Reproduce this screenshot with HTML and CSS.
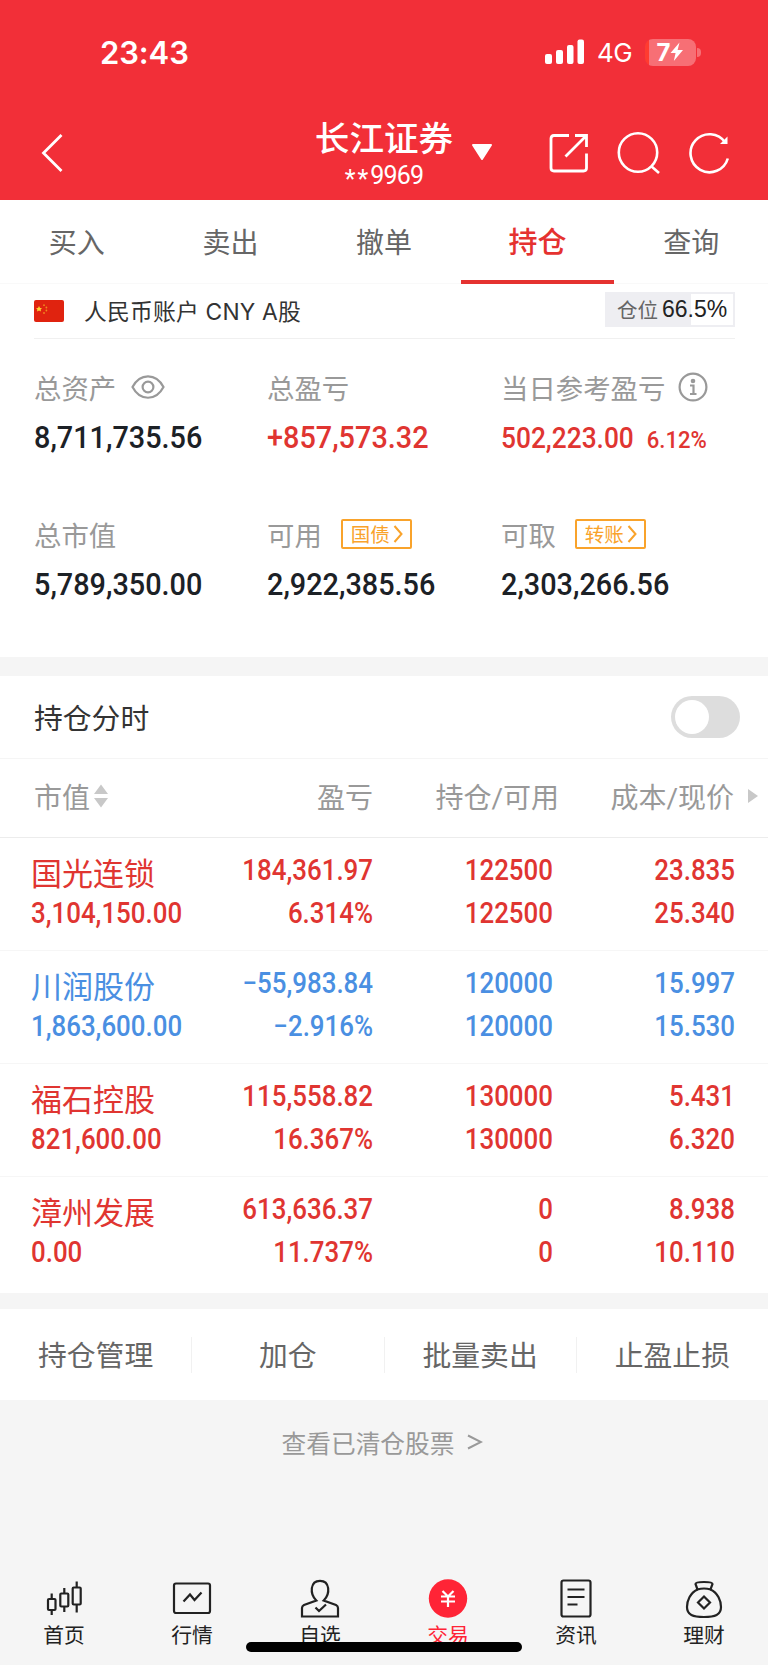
FILE: index.html
```html
<!DOCTYPE html>
<html lang="zh-CN">
<head>
  <meta charset="UTF-8" />
  <meta name="viewport" content="width=device-width, initial-scale=1.0" />
  <title>长江证券 - 持仓</title>
  <link rel="stylesheet" href="styles.css">
</head>
<body>
  <header class="header">
    <div class="status">
      <span class="time">23:43</span>
      <div class="status-right">
        <svg class="signal" width="40" height="26" viewBox="0 0 40 26" fill="#fff">
          <rect x="0" y="15" width="7" height="10" rx="2" />
          <rect x="11" y="11" width="7" height="14" rx="2" />
          <rect x="22" y="6" width="6.5" height="19" rx="2" />
          <rect x="32.5" y="0.5" width="6.5" height="24.5" rx="2" />
        </svg>
        <span class="network">4G</span>
        <div class="battery">
          <span>7</span>
          <svg width="14" height="20" viewBox="0 0 14 20" fill="#fff"><path d="M9.5 0.5 L0.5 11 H5.6 L3.8 19 L13 8 H7.6 Z" /></svg>
        </div>
        <div class="battery-cap"></div>
      </div>
    </div>

    <div class="navbar">
      <svg class="back" width="24" height="40" viewBox="0 0 24 40" fill="none" stroke="#fff" stroke-width="2.8"><path d="M20.5 2 L2.5 20 L20.5 38" /></svg>
      <div class="broker">
        <div class="broker-name">长江证券</div>
        <div class="broker-no"><span>**</span>9969</div>
      </div>
      <svg class="caret" width="22" height="18" viewBox="0 0 22 18" fill="#fff" stroke="#fff" stroke-width="2" stroke-linejoin="round"><path d="M2 2 H20 L11 16 Z" /></svg>
      <div class="nav-icons">
        <svg width="40" height="42" viewBox="0 0 40 42" fill="none" stroke="#fff" stroke-width="2.8">
          <path d="M20 3.5 H5 Q2 3.5 2 6.5 V36 Q2 39 5 39 H34.5 Q37.5 39 37.5 36 V21.5" />
          <path d="M26 3.5 H37.5 V15 M37.5 3.5 L16.5 24.5" />
        </svg>
        <svg width="44" height="42" viewBox="0 0 44 42" fill="none" stroke="#fff" stroke-width="2.6">
          <circle cx="21" cy="20.5" r="19.2" /><path d="M34 34 L42 41" />
        </svg>
        <svg width="42" height="42" viewBox="0 0 42 42" fill="none" stroke="#fff" stroke-width="2.6">
          <path d="M38.8 26.5 A19 19 0 1 1 36.2 10.5" /><path d="M38.5 4.5 V12 H31 Z" fill="#fff" stroke="none" />
        </svg>
      </div>
    </div>
  </header>

  <nav class="tabs">
    <a>买入</a>
    <a>卖出</a>
    <a>撤单</a>
    <a class="active">持仓</a>
    <a>查询</a>
  </nav>

  <section class="account">
    <svg class="flag" width="30" height="22" viewBox="0 0 30 22">
      <rect width="30" height="22" rx="2" fill="#e0230f" />
      <path d="M5 6 L6 8 L8 8.2 L6.6 9.6 L7 11.6 L5 10.6 L3 11.6 L3.4 9.6 L2 8.2 L4 8 Z" fill="#fcd535" />
      <g fill="#f08a20"><circle cx="10" cy="5.2" r="0.9" /><circle cx="12.4" cy="7.5" r="0.9" /><circle cx="12.4" cy="10.5" r="0.9" /><circle cx="10" cy="13" r="0.9" /></g>
    </svg>
    <span class="account-name">人民币账户 CNY A股</span>
    <div class="position"><span>仓位</span><b>66.5%</b></div>
  </section>

  <section class="summary">
    <div class="item">
      <div class="label">总资产
        <svg class="eye" width="34" height="26" viewBox="0 0 34 26" fill="none" stroke="#999" stroke-width="2.2"><path d="M1.5 13 C9 -1.3 25 -1.3 32.5 13 C25 27.3 9 27.3 1.5 13 Z" /><circle cx="17" cy="13" r="5.4" /></svg>
      </div>
      <div class="value">8,711,735.56</div>
    </div>
    <div class="item">
      <div class="label">总盈亏</div>
      <div class="value up">+857,573.32</div>
    </div>
    <div class="item">
      <div class="label">当日参考盈亏
        <svg class="info" width="30" height="30" viewBox="0 0 30 30" fill="none" stroke="#999" stroke-width="2.2"><circle cx="15" cy="15" r="13.4" /><circle cx="15" cy="9" r="2.3" fill="#999" stroke="none" /><path d="M12 13.5 H15.5 V22 M12 22 H18.5" /></svg>
      </div>
      <div class="value small up">502,223.00 <span class="rate">6.12%</span></div>
    </div>
    <div class="item">
      <div class="label">总市值</div>
      <div class="value">5,789,350.00</div>
    </div>
    <div class="item">
      <div class="label">可用
        <span class="link-tag">国债<svg width="10" height="18" viewBox="0 0 10 18" fill="none" stroke="#f9a32b" stroke-width="2"><path d="M1.5 1 L8.5 9 L1.5 17" /></svg></span>
      </div>
      <div class="value">2,922,385.56</div>
    </div>
    <div class="item">
      <div class="label">可取
        <span class="link-tag">转账<svg width="10" height="18" viewBox="0 0 10 18" fill="none" stroke="#f9a32b" stroke-width="2"><path d="M1.5 1 L8.5 9 L1.5 17" /></svg></span>
      </div>
      <div class="value">2,303,266.56</div>
    </div>
  </section>

  <section class="minute">
    <span>持仓分时</span>
    <div class="switch"><i></i></div>
  </section>

  <section class="holdings">
    <div class="row head">
      <div>市值<svg class="sort" width="14" height="24" viewBox="0 0 14 24" fill="#c8c8c8"><path d="M7 0.5 L14 10 H0 Z M0 14 H14 L7 23.5 Z" /></svg></div>
      <div>盈亏</div>
      <div>持仓/可用</div>
      <div>成本/现价</div>
      <svg class="more" width="10" height="14" viewBox="0 0 10 14" fill="#c8c8c8"><path d="M0 0 L10 7 L0 14 Z" /></svg>
    </div>
    <div class="row up">
      <div><p class="name">国光连锁</p><p>3,104,150.00</p></div>
      <div><p>184,361.97</p><p>6.314%</p></div>
      <div><p>122500</p><p>122500</p></div>
      <div><p>23.835</p><p>25.340</p></div>
    </div>
    <div class="row down">
      <div><p class="name">川润股份</p><p>1,863,600.00</p></div>
      <div><p>−55,983.84</p><p>−2.916%</p></div>
      <div><p>120000</p><p>120000</p></div>
      <div><p>15.997</p><p>15.530</p></div>
    </div>
    <div class="row up">
      <div><p class="name">福石控股</p><p>821,600.00</p></div>
      <div><p>115,558.82</p><p>16.367%</p></div>
      <div><p>130000</p><p>130000</p></div>
      <div><p>5.431</p><p>6.320</p></div>
    </div>
    <div class="row up">
      <div><p class="name">漳州发展</p><p>0.00</p></div>
      <div><p>613,636.37</p><p>11.737%</p></div>
      <div><p>0</p><p>0</p></div>
      <div><p>8.938</p><p>10.110</p></div>
    </div>
  </section>

  <section class="actions">
    <a>持仓管理</a>
    <a>加仓</a>
    <a>批量卖出</a>
    <a>止盈止损</a>
  </section>

  <a class="cleared">查看已清仓股票 <svg width="16" height="16" viewBox="0 0 16 16" fill="none" stroke="#999" stroke-width="2"><path d="M1 1.5 L14 8 L1 14.5" /></svg></a>

  <footer class="tabbar">
    <a>
      <svg width="40" height="40" viewBox="0 0 40 40" fill="none" stroke="#222" stroke-width="2.2">
        <rect x="4" y="20" width="7.5" height="11" rx="1" /><path d="M7.7 14.5 V20 M7.7 31 V36" />
        <rect x="16.3" y="14.5" width="8" height="13" rx="1" /><path d="M20.3 9 V14.5 M20.3 27.5 V33" />
        <rect x="28.7" y="8.5" width="8" height="17" rx="1" /><path d="M32.7 2.5 V8.5 M32.7 25.5 V33.5" />
      </svg>
      首页
    </a>
    <a>
      <svg width="40" height="40" viewBox="0 0 40 40" fill="none" stroke="#222" stroke-width="2.2">
        <rect x="2" y="4.5" width="36" height="29.5" rx="2" /><path d="M11.5 22.5 L18 15.5 L22.5 21 L29.5 13.5" />
      </svg>
      行情
    </a>
    <a>
      <svg width="40" height="40" viewBox="0 0 40 40" fill="none" stroke="#222" stroke-width="2.2">
        <path d="M16.3 21.5 C9.5 15 10 1.8 20 1.8 C30 1.8 30.5 15 23.7 21.5 L36 26 Q38 27 38 29 V37.5 H2 V29 Q2 27 4 26 Z" /><path d="M15.5 28.5 L19 32 L26 25.5" />
      </svg>
      自选
    </a>
    <a class="active">
      <svg width="40" height="40" viewBox="0 0 40 40" fill="none" stroke="#fff" stroke-width="2.2">
        <circle cx="20" cy="19.5" r="19.2" fill="#ff2436" stroke="none" /><path d="M14.5 12 L20 17.5 L25.5 12 M13 17.5 H27 M13 22.5 H27 M20 17.5 V28" />
      </svg>
      交易
    </a>
    <a>
      <svg width="40" height="40" viewBox="0 0 40 40" fill="none" stroke="#222" stroke-width="2.2">
        <rect x="5.5" y="1.5" width="29" height="36" rx="2" /><path d="M11.5 10.5 H28.5 M11.5 18 H28.5 M11.5 25.5 H21.5" />
      </svg>
      资讯
    </a>
    <a>
      <svg width="40" height="40" viewBox="0 0 40 40" fill="none" stroke="#222" stroke-width="2.2">
        <path d="M13.5 10.5 L11.5 5 Q11.5 3 20 3 Q28.5 3 28.5 5 L26.5 10.5 Q20 8.5 13.5 10.5 Z" />
        <path d="M13.5 10.5 C6 14 3 22 3 28 C3 36 9 38 20 38 C31 38 37 36 37 28 C37 22 34 14 26.5 10.5" />
        <path d="M20 17.5 L26 23.5 L20 29.5 L14 23.5 Z" />
      </svg>
      理财
    </a>
    <div class="home-indicator"></div>
  </footer>
</body>
</html>
```

FILE: styles.css
```css
* {
  box-sizing: border-box;
}
body {
  margin: 0;
  width: 768px;
  height: 1665px;
  background: #f5f5f5;
  color: #333;
  font-family: Inter, "Noto Sans CJK SC", sans-serif;
  font-size: 28px;
  overflow: hidden;
}
svg {
  display: block;
  flex: none;
}
p {
  margin: 0;
}

/* header */
.header {
  height: 200px;
  background: #f22f38;
  color: #fff;
}
.status {
  display: flex;
  justify-content: space-between;
  height: 104px;
  padding: 0 67px 0 100px;
  align-items: center;
}
.time {
  font-size: 31px;
  font-weight: 600;
  letter-spacing: -0.1px;
}
.status-right {
  display: flex;
  align-items: center;
}
.network {
  width: 36px;
  margin-left: 12px;
  font-size: 26px;
  letter-spacing: -0.5px;
}
.battery {
  display: flex;
  align-items: center;
  justify-content: center;
  width: 51px;
  height: 27px;
  margin-left: 12px;
  border-radius: 8px;
  background: linear-gradient(90deg, #ff3b30 4px, #f76f75 4px);
  font-size: 24px;
  font-weight: 700;
}
.battery-cap {
  width: 4px;
  height: 9px;
  margin-left: 1px;
  border-radius: 0 4px 4px 0;
  background: #f76f75;
}
.navbar {
  display: flex;
  height: 96px;
  padding: 0 37px 0 41px;
}
.back {
  margin-top: 29px;
}
.broker {
  width: 140px;
  margin-left: 249px;
  text-align: center;
  white-space: nowrap;
}
.broker-name {
  margin-top: 14px;
  font-size: 34.6px;
  font-weight: 500;
  line-height: 40px;
}
.broker-no {
  margin-top: 3px;
  font: 25px/30px Roboto, sans-serif;
  letter-spacing: -0.8px;
}
.broker-no span {
  letter-spacing: 2px;
  vertical-align: -4px;
}
.caret {
  margin: 39px 0 0 17px;
}
.nav-icons {
  display: flex;
  margin: 28px 0 0 auto;
  gap: 28px;
}

/* tabs */
.tabs {
  display: flex;
  height: 84px;
  background: #fff;
  border-bottom: 1px solid #f9f9f9;
}
.tabs a {
  flex: 1;
  height: 84px;
  border-bottom: 4px solid transparent;
  color: #666;
  text-align: center;
  line-height: 86px;
}
.tabs .active {
  border-color: #e53230;
  color: #e53230;
  font-size: 29px;
  font-weight: 500;
}

/* account */
.account {
  display: flex;
  align-items: center;
  height: 55px;
  padding: 0 33px 2px 34px;
  background: linear-gradient(#f0f0f0, #f0f0f0) 34px 100% / 701px 1px no-repeat #fff;
}
.account-name {
  margin: -1px 0 0 20px;
  font-size: 22.8px;
  letter-spacing: 0.2px;
}
.position {
  display: flex;
  align-items: center;
  width: 130px;
  height: 35px;
  margin: -2px 0 0 auto;
  padding-left: 10px;
  border: 2px solid #eeeef2;
  background: linear-gradient(90deg, #eeeef2 84px, #fff 84px);
  color: #666;
  font-size: 20.5px;
}
.position span {
  margin-top: -2px;
}
.position b {
  margin-left: 4px;
  color: #222;
  font: 23px "Liberation Sans", sans-serif;
}

/* summary */
.summary {
  display: grid;
  grid-template-columns: 233px 234px 1fr;
  grid-auto-rows: 147px;
  height: 318px;
  padding: 25px 0 0 34px;
  background: #fff;
}
.label {
  display: flex;
  align-items: center;
  height: 46px;
  color: #999;
  font-size: 27.4px;
}
.eye {
  margin-left: 15px;
}
.info {
  margin-left: 13px;
}
.value {
  height: 56px;
  color: #1c2126;
  font: 500 31px/56px Roboto, sans-serif;
  white-space: nowrap;
  transform: scaleX(0.93);
  transform-origin: left;
}
.value.up {
  color: #e03531;
}
.value.small {
  font-size: 28.6px;
  transform: scaleX(0.92);
}
.rate {
  margin-left: 7px;
  font-size: 24px;
}
.link-tag {
  display: flex;
  align-items: center;
  width: 71px;
  height: 30px;
  margin-left: 19px;
  padding: 0 0 1px 8px;
  gap: 3px;
  border: 2px solid #f9a32b;
  border-radius: 2px;
  color: #f9a32b;
  font-size: 19.5px;
}

/* switch */
.minute {
  display: flex;
  align-items: center;
  justify-content: space-between;
  height: 83px;
  margin-top: 19px;
  padding: 0 28px 0 34px;
  background: #fff;
  border-bottom: 1px solid #f5f5f5;
  font-size: 28.8px;
}
.minute span {
  margin-top: -1px;
}
.switch {
  width: 69px;
  height: 42px;
  padding: 4px;
  border-radius: 21px;
  background: #ddd;
}
.switch i {
  display: block;
  width: 34px;
  height: 34px;
  border-radius: 50%;
  background: #fff;
}

/* holdings */
.holdings {
  height: 534px;
  background: #fff;
}
.row {
  position: relative;
  display: grid;
  grid-template-columns: 180px 162px 180px 182px;
  height: 113px;
  padding: 12px 0 0 31px;
  border-bottom: 1px solid #f6f6f6;
  font-family: Roboto, "Noto Sans CJK SC", sans-serif;
  font-size: 28.6px;
  font-weight: 500;
  text-align: right;
  white-space: nowrap;
}
.row:last-child {
  border: none;
}
.row p {
  height: 43px;
  line-height: 41px;
  transform: scaleX(0.905);
  transform-origin: right;
}
.row div:first-child p {
  text-align: left;
  transform-origin: left;
}
.row div:first-child {
  text-align: left;
}
.row .name {
  font-size: 31px;
  font-weight: 400;
  line-height: 49px;
  transform: none;
}
.row.up {
  color: #e03531;
}
.row.down {
  color: #4a8fe2;
}
.row.head {
  height: 79px;
  padding: 0 0 0 34px;
  grid-template-columns: 177px 162px 186px 175px;
  border-color: #ececec;
  color: #999;
  font-size: 28px;
  font-weight: 400;
  line-height: 79px;
}
.sort {
  display: inline-block;
  margin-left: 4px;
}
.more {
  position: absolute;
  left: 748px;
  top: 30px;
}

/* actions */
.actions {
  display: flex;
  align-items: center;
  height: 91px;
  margin-top: 16px;
  background: #fff;
}
.actions a {
  flex: 1;
  height: 36px;
  color: #666;
  font-size: 28.8px;
  line-height: 38px;
  text-align: center;
}
.actions a + a {
  border-left: 1px solid #f1f1f1;
}
.cleared {
  display: flex;
  align-items: center;
  justify-content: center;
  gap: 13px;
  height: 84px;
  padding-right: 3px;
  color: #999;
  font-size: 24.7px;
}

/* bottom bar */
.tabbar {
  position: relative;
  display: flex;
  height: 102px;
  margin-top: 80px;
}
.tabbar a {
  display: flex;
  flex: 1;
  flex-direction: column;
  align-items: center;
  padding-top: 15px;
  color: #222;
  font-size: 20.8px;
  line-height: 34px;
}
.tabbar .active {
  color: #ff2436;
}
.home-indicator {
  position: absolute;
  left: 246px;
  top: 78px;
  width: 276px;
  height: 10px;
  border-radius: 5px;
  background: #000;
}
```
